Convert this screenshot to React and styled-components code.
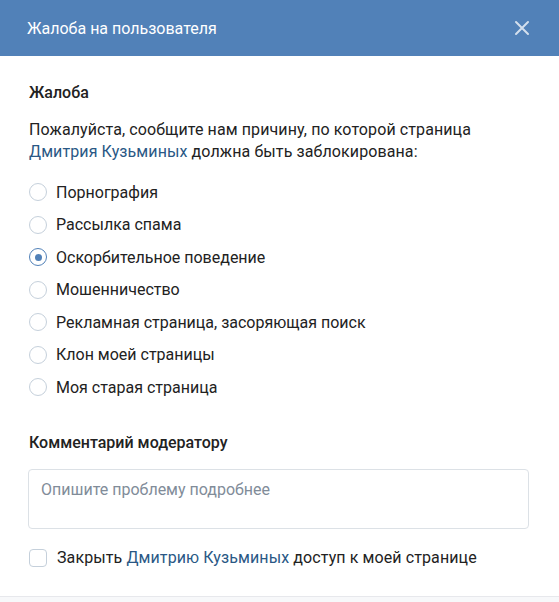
import React, { useState } from 'react'
import styled, { createGlobalStyle } from 'styled-components'

const GlobalStyle = createGlobalStyle`
  body {
    margin: 0;
    background: #fff;
    font-family: Roboto, "Open Sans", Arial, sans-serif;
    -webkit-font-smoothing: antialiased;
  }
`

const Box = styled.div`
  width: 559px;
  height: 602px;
  display: flex;
  flex-direction: column;
  background: #fff;
  overflow: hidden;
`

const Header = styled.header`
  display: flex;
  align-items: center;
  justify-content: space-between;
  height: 56px;
  flex-shrink: 0;
  padding: 0 29px 0 27px;
  background: #5181b8;
`

const Title = styled.h2`
  margin: 0;
  color: #fff;
  font-size: 16px;
  font-weight: 400;
`

const CloseButton = styled.button`
  display: flex;
  padding: 0;
  border: 0;
  background: none;
  cursor: pointer;
  color: rgba(255, 255, 255, 0.75);
`

const Body = styled.div`
  flex: 1;
  padding: 27px 29px 0;
  color: #222;
`

const SectionTitle = styled.h3`
  margin: 0;
  font-size: 16px;
  font-weight: 500;
  line-height: 20px;
`

const Text = styled.p`
  margin: 16px 0 0;
  font-size: 16px;
  line-height: 22px;
  letter-spacing: 0.1px;
`

const Link = styled.a`
  color: #2a5885;
  text-decoration: none;
`

const Options = styled.div`
  display: flex;
  flex-direction: column;
  margin-top: 13px;
`

const Option = styled.label`
  display: flex;
  align-items: center;
  gap: 9px;
  height: 32.5px;
  font-size: 16px;
  cursor: pointer;
`

const Radio = styled.span`
  position: relative;
  width: 18px;
  height: 18px;
  box-sizing: border-box;
  border-radius: 50%;
  border: 1px solid ${p => (p.checked ? '#5181b8' : '#c5d0db')};
  flex-shrink: 0;

  &::after {
    content: '';
    display: ${p => (p.checked ? 'block' : 'none')};
    position: absolute;
    left: 4.5px;
    top: 4.5px;
    width: 7px;
    height: 7px;
    border-radius: 50%;
    background: #5181b8;
  }
`

const Comment = styled.h3`
  margin: 29px 0 0;
  font-size: 16px;
  font-weight: 500;
  line-height: 20px;
`

const TextArea = styled.textarea`
  display: block;
  box-sizing: border-box;
  width: 501px;
  height: 60px;
  margin: 16px 0 0 -1px;
  padding: 10px 12px;
  border: 1px solid #dce1e6;
  border-radius: 4px;
  resize: none;
  font: 16px/20px Roboto, Arial, sans-serif;
  color: #222;
  outline: none;

  &::placeholder {
    color: #818c99;
  }
`

const CheckRow = styled.label`
  display: flex;
  align-items: center;
  gap: 10px;
  margin-top: 19px;
  font-size: 16px;
  line-height: 20px;
  letter-spacing: 0.1px;
  cursor: pointer;
`

const Checkbox = styled.span`
  width: 18px;
  height: 18px;
  box-sizing: border-box;
  border: 1px solid #c5d0db;
  border-radius: 4px;
  flex-shrink: 0;
`

const Footer = styled.footer`
  height: 5px;
  flex-shrink: 0;
  border-top: 1px solid #e7e8ec;
  background: #f7f8fa;
`

const reasons = [
  'Порнография',
  'Рассылка спама',
  'Оскорбительное поведение',
  'Мошенничество',
  'Рекламная страница, засоряющая поиск',
  'Клон моей страницы',
  'Моя старая страница',
]

export default function App() {
  const [reason, setReason] = useState(2)

  return (
    <Box>
      <GlobalStyle />
      <Header>
        <Title>Жалоба на пользователя</Title>
        <CloseButton aria-label="Закрыть">
          <svg width="16" height="16" viewBox="0 0 16 16">
            <path d="M2 2l12 12M14 2L2 14" stroke="currentColor" strokeWidth="2" strokeLinecap="round" />
          </svg>
        </CloseButton>
      </Header>
      <Body>
        <SectionTitle>Жалоба</SectionTitle>
        <Text>
          Пожалуйста, сообщите нам причину, по которой страница{' '}
          <Link href="#">Дмитрия Кузьминых</Link> должна быть заблокирована:
        </Text>
        <Options>
          {reasons.map((r, i) => (
            <Option key={r} onClick={() => setReason(i)}>
              <Radio checked={reason === i} />
              {r}
            </Option>
          ))}
        </Options>
        <Comment>Комментарий модератору</Comment>
        <TextArea placeholder="Опишите проблему подробнее" />
        <CheckRow>
          <Checkbox />
          <span>
            Закрыть <Link href="#">Дмитрию Кузьминых</Link> доступ к моей странице
          </span>
        </CheckRow>
      </Body>
      <Footer />
    </Box>
  )
}
